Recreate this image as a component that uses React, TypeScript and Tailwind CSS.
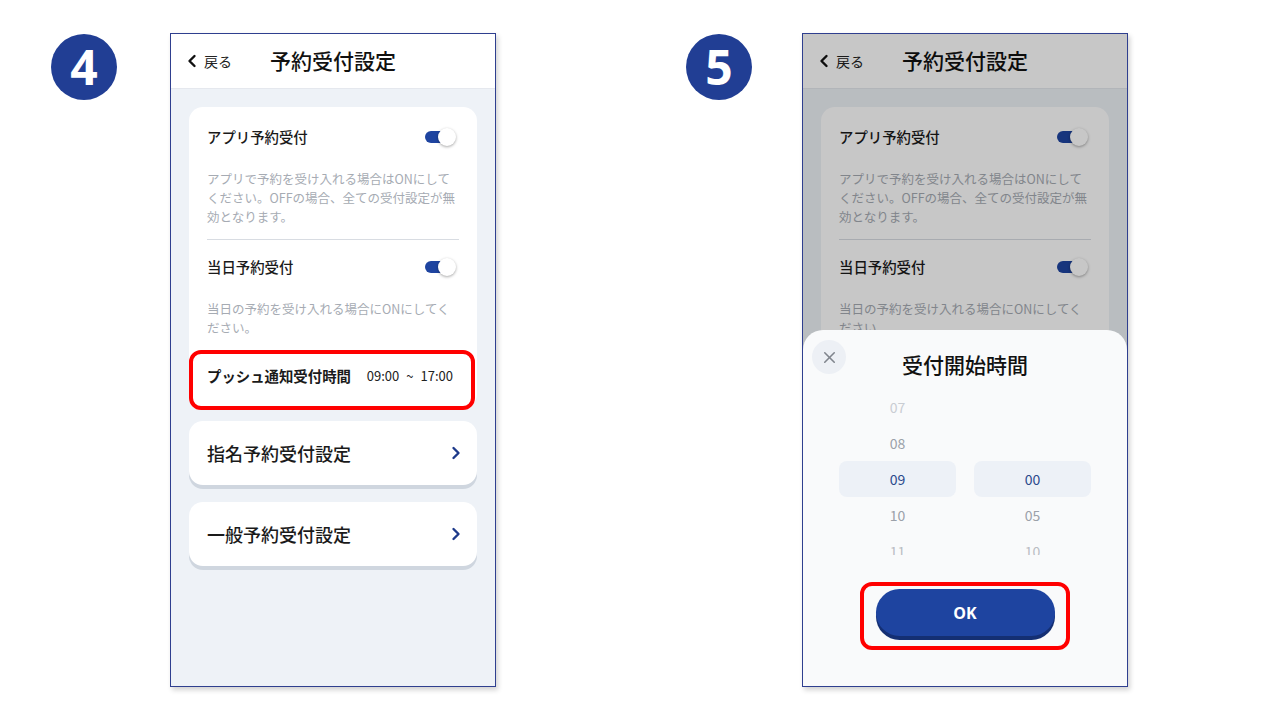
import { X } from 'lucide-react';

const FONT = { fontFamily: '"Noto Sans CJK JP", "Noto Sans", sans-serif' };

function Badge({ n }: { n: string }) {
  return (
    <div className="w-[66px] h-[66px] rounded-full bg-[#213e94] flex items-center justify-center shrink-0">
      <span
        className="text-white text-[48px] font-bold leading-none"
        style={{ fontFamily: '"Open Sans", "Liberation Sans", sans-serif' }}
      >
        {n}
      </span>
    </div>
  );
}

function Toggle() {
  return (
    <div className="relative w-[31px] h-[18px] mr-[3px]">
      <div className="absolute left-0 top-[3px] w-[22px] h-[12px] rounded-full bg-[#1e44a0]" />
      <div className="absolute right-0 top-0 w-[18px] h-[18px] rounded-full bg-white shadow-[0_1px_3px_rgba(0,0,0,0.35)]" />
    </div>
  );
}

function Chevron({ className }: { className?: string }) {
  return (
    <svg width="10" height="14" viewBox="0 0 10 14" className={className}>
      <path d="M2.5 2 L7.5 7 L2.5 12" fill="none" stroke="currentColor" strokeWidth="2.4" strokeLinecap="round" strokeLinejoin="round" />
    </svg>
  );
}

function LinkCard({ label }: { label: string }) {
  return (
    <div className="h-[64px] bg-white rounded-[14px] shadow-[0_4px_0_#cfd6df] flex items-center justify-between pl-[18px] pr-[16px]">
      <span className="text-[18px] font-medium text-[#1a1a1a]">{label}</span>
      <Chevron className="text-[#1e3a8a]" />
    </div>
  );
}

function Screen() {
  return (
    <div className="flex flex-col h-full">
      <div className="h-[55px] shrink-0 bg-white border-b border-[#e5e8ee] grid grid-cols-[1fr_auto_1fr] items-center">
        <div className="flex items-center gap-[7px] pl-[16px]">
          <svg width="10" height="14" viewBox="0 0 10 14" className="text-[#111]">
            <path d="M7.5 2 L2.5 7 L7.5 12" fill="none" stroke="currentColor" strokeWidth="2.4" strokeLinecap="round" strokeLinejoin="round" />
          </svg>
          <span className="text-[14px] text-[#222]">戻る</span>
        </div>
        <span className="text-[21px] font-medium text-[#111]">予約受付設定</span>
        <div />
      </div>
      <div className="flex-1 bg-[#eef2f7] px-[18px] pt-[18px] flex flex-col">
        <div className="bg-white rounded-[14px] px-[18px] pt-[20px] pb-[22px]">
          <div className="h-[20px] flex items-center justify-between">
            <span className="text-[14.4px] font-medium text-[#1a1a1a]">アプリ予約受付</span>
            <Toggle />
          </div>
          <p className="mt-[22px] text-[12.5px] leading-[19px] text-[#a6abb3] whitespace-nowrap">
            アプリで予約を受け入れる場合はONにして
            <br />
            ください。OFFの場合、全ての受付設定が無
            <br />
            効となります。
          </p>
          <div className="mt-[13px] h-px bg-[#d8dce2]" />
          <div className="mt-[17px] h-[20px] flex items-center justify-between">
            <span className="text-[14.4px] font-medium text-[#1a1a1a]">当日予約受付</span>
            <Toggle />
          </div>
          <p className="mt-[22px] text-[12.5px] leading-[19px] text-[#a6abb3] whitespace-nowrap">
            当日の予約を受け入れる場合にONにしてく
            <br />
            ださい。
          </p>
          <div className="mt-[29px] h-[20px] flex items-center justify-between">
            <span className="text-[14.4px] font-bold text-[#1a1a1a]">プッシュ通知受付時間</span>
            <span className="flex items-center gap-[7px] text-[13px] text-[#222] mr-[6px]">
              <span>09:00</span>
              <span>~</span>
              <span>17:00</span>
            </span>
          </div>
        </div>
        <div className="mt-[13px] flex flex-col gap-[17px]">
          <LinkCard label="指名予約受付設定" />
          <LinkCard label="一般予約受付設定" />
        </div>
      </div>
    </div>
  );
}

function PickerColumn({ items }: { items: string[] }) {
  const tone = ['text-[#c9cdd3]', 'text-[#9ba1a9]', 'text-[#2b4a8c]', 'text-[#9ba1a9]', 'text-[#b9bdc3]'];
  return (
    <div className="w-[117px] flex flex-col">
      {items.map((v, i) => (
        <div
          key={i}
          className={`h-[36px] shrink-0 flex items-center justify-center text-[14px] rounded-[8px] ${tone[i]} ${i === 2 ? 'bg-[#edf1f7]' : ''}`}
        >
          {v}
        </div>
      ))}
    </div>
  );
}

function Phone({ sheet }: { sheet?: boolean }) {
  return (
    <div className="relative w-[326px] h-[654px] border border-[#2f3f8f] bg-white overflow-hidden shrink-0 shadow-[2px_3px_5px_rgba(0,0,0,0.18)]">
      <Screen />
      {sheet && (
        <>
          <div className="absolute inset-0 bg-black/[0.22]" />
          <div className="absolute left-0 right-0 bottom-0 h-[356px] bg-[#f9fafb] rounded-t-[20px] flex flex-col items-center">
            <div className="absolute left-[9px] top-[10px] w-[34px] h-[34px] rounded-full bg-[#edf0f5] flex items-center justify-center">
              <X size={19} strokeWidth={2} className="text-[#80858d]" />
            </div>
            <div className="mt-[21px] h-[28px] flex items-center text-[21px] font-medium text-[#111]">受付開始時間</div>
            <div className="mt-[10px] h-[166px] overflow-hidden flex gap-[18px]">
              <PickerColumn items={['07', '08', '09', '10', '11']} />
              <PickerColumn items={['', '', '00', '05', '10']} />
            </div>
            <div className="mt-[34px] w-[179px] h-[47px] rounded-full bg-[#1e44a0] shadow-[0_4px_0_#142f73] flex items-center justify-center">
              <span className="text-white text-[16px] font-bold" style={{ fontFamily: '"Open Sans", "Noto Sans", sans-serif' }}>
                OK
              </span>
            </div>
          </div>
          <div className="absolute left-[57px] top-[548px] w-[210px] h-[68px] border-[4px] border-[#ff0000] rounded-[12px]" />
        </>
      )}
      {!sheet && <div className="absolute left-[18px] top-[316px] w-[286px] h-[60px] border-[4px] border-[#ff0000] rounded-[12px]" />}
    </div>
  );
}

export default function App() {
  return (
    <div className="w-[1280px] h-[720px] bg-white flex items-start pt-[33px]" style={FONT}>
      <div className="ml-[51px] mt-[1px]">
        <Badge n="4" />
      </div>
      <div className="ml-[53px]">
        <Phone />
      </div>
      <div className="ml-[190px] mt-[1px]">
        <Badge n="5" />
      </div>
      <div className="ml-[50px]">
        <Phone sheet />
      </div>
    </div>
  );
}
